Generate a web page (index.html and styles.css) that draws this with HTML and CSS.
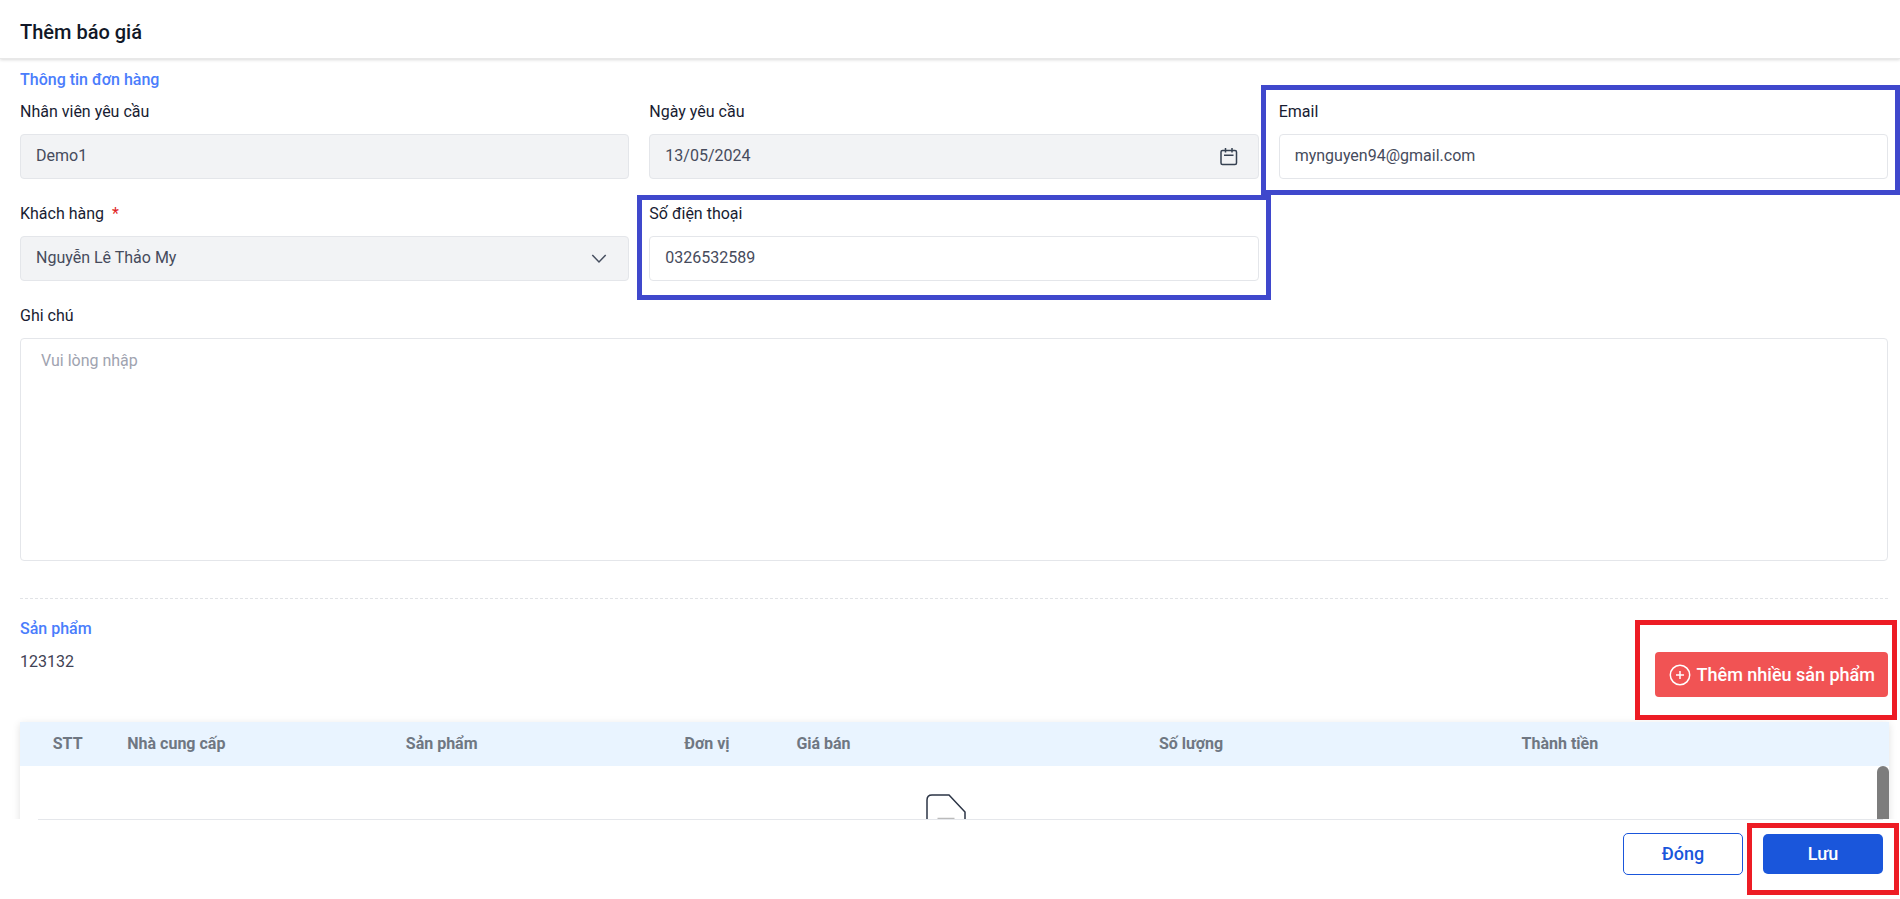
FILE: index.html
```html
<!DOCTYPE html>
<html lang="vi">
<head>
<meta charset="utf-8">
<meta name="viewport" content="width=device-width, initial-scale=1">
<title>Thêm báo giá</title>
<link rel="stylesheet" href="styles.css">
</head>
<body>
<form class="page">
  <header class="page-header"><h1 class="page-title">Thêm báo giá</h1></header>
  <main class="content">
    <h2 class="section-title">Thông tin đơn hàng</h2>
    <div class="fields">
      <div class="field">
        <label class="label" for="staff">Nhân viên yêu cầu</label>
        <input class="control" id="staff" type="text" value="Demo1" disabled>
      </div>
      <div class="field">
        <label class="label" for="date">Ngày yêu cầu</label>
        <div class="with-icon">
          <input class="control" id="date" type="text" value="13/05/2024" disabled>
          <svg class="icon icon-calendar" viewBox="0 0 18 18" fill="none" stroke="#364152" stroke-width="1.5" aria-hidden="true"><rect x="1" y="2.5" width="15.500" height="14" rx="1.500"/><path d="M5.500 0v4.500M12 0v4.500M4 7.200h9.500"/></svg>
        </div>
      </div>
      <div class="field marked mark-email">
        <label class="label" for="email">Email</label>
        <input class="control" id="email" type="text" value="mynguyen94@gmail.com">
      </div>
      <div class="field">
        <label class="label" for="customer">Khách hàng&nbsp; <span class="required">*</span></label>
        <div class="with-icon">
          <select class="control" id="customer" disabled><option>Nguyễn Lê Thảo My</option></select>
          <svg class="icon icon-chevron" viewBox="0 0 16 16" fill="none" stroke="#464e5f" stroke-width="1.5" aria-hidden="true"><path d="M1.300 4 8 11l6.700-7"/></svg>
        </div>
      </div>
      <div class="field marked mark-phone">
        <label class="label" for="phone">Số điện thoại</label>
        <input class="control" id="phone" type="text" value="0326532589">
      </div>
    </div>
    <div class="field">
      <label class="label" for="note">Ghi chú</label>
      <textarea class="control note" id="note" placeholder="Vui lòng nhập"></textarea>
    </div>
    <section class="products">
      <div class="products-head">
        <div>
          <h2 class="section-title">Sản phẩm</h2>
          <p class="code">123132</p>
        </div>
        <div class="marked mark-add">
          <button class="button button-add" type="button">
            <svg class="icon-plus" viewBox="0 0 22 22" fill="none" stroke="#fff" stroke-width="1.500" aria-hidden="true"><circle cx="11" cy="11" r="9.700"/><path d="M11 7v8M7 11h8"/></svg>
            Thêm nhiều sản phẩm
          </button>
        </div>
      </div>
      <div class="table-card">
        <table class="table">
          <colgroup><col class="col-index"><col class="col-name"><col class="col-name"><col class="col-unit"><col class="col-amount"><col class="col-amount"><col></colgroup>
          <thead><tr><th class="center">STT</th><th>Nhà cung cấp</th><th>Sản phẩm</th><th>Đơn vị</th><th>Giá bán</th><th>Số lượng</th><th>Thành tiền</th></tr></thead>
          <tbody><tr><td class="empty" colspan="7">
            <svg class="icon-empty" viewBox="0 0 40 48" fill="none" stroke="#2b3445" stroke-width="1.500" aria-hidden="true"><path d="M6 1h17l16 17v25q0 4-4 4H5q-4 0-4-4V6q0-5 5-5z"/><path stroke="#bbb" d="M11.500 24.500h17M11.500 31.500h17"/></svg>
          </td></tr></tbody>
        </table>
        <div class="scroll-thumb"></div>
      </div>
    </section>
  </main>
  <footer class="actions">
    <button class="button button-close" type="button">Đóng</button>
    <div class="marked mark-save"><button class="button button-save" type="submit">Lưu</button></div>
  </footer>
</form>
</body>
</html>
```
FILE: styles.css
```css
* { box-sizing: border-box; }
body { margin: 0; background: #fff; color: #3f4254; font: 400 16px/24px Roboto, "Noto Sans", sans-serif; }
h1, h2, p { margin: 0; }
.page { display: flex; flex-direction: column; height: 100vh; }
.page-header { flex: none; padding: 20px 20px 14px; border-bottom: 1px solid #e8e8e8; box-shadow: 0 1px 3px rgba(0, 0, 0, .15); }
.page-title { color: #111827; font-size: 20px; font-weight: 500; line-height: 24px; }
.content { flex: 1; min-height: 0; overflow: hidden; padding: 9px 12px 0 20px; }
.section-title { color: #4a7dfc; font-size: 16px; font-weight: 500; line-height: 24px; }
.fields { display: grid; grid-template-columns: repeat(3, minmax(0, 1fr)); column-gap: 20px; }
.field { display: flex; flex-direction: column; gap: 10px; padding: 8px 0 15px; }
.label { color: #181c32; line-height: 24px; }
.required { color: #e02424; }
.control { width: 100%; height: 45px; margin: 0; padding: 0 15px 2px; border: 1px solid #e4e6ea; border-radius: 4px; background: #fff; color: #464b5c; font: inherit; outline: none; appearance: none; }
.control:disabled { background: #f2f3f5; color: #464b5c; opacity: 1; }
.with-icon { display: grid; align-items: center; }
.with-icon > * { grid-area: 1 / 1; }
.icon { justify-self: end; pointer-events: none; }
.icon-calendar { width: 18px; height: 18px; margin-right: 21px; }
.icon-chevron { width: 16px; height: 16px; margin-right: 22px; }
.note { display: block; height: 223px; padding: 10px 20px; resize: none; }
.note::placeholder { color: #a0a3b0; opacity: 1; }

/* Highlight frames */
.marked { position: relative; }
.marked::after { content: ""; position: absolute; z-index: 1; border: 5px solid #3f48cc; pointer-events: none; }
.mark-email::after { inset: -7px -12px -1px -18px; }
.mark-phone::after { inset: 1px -12px -4px; }
.mark-add::after { inset: -32px -9px -23px -20px; border-color: #ed1c24; }
.mark-save::after { inset: -11px -16px -21px; border-color: #ed1c24; }

.products { margin-top: 22px; padding-top: 18px; border-top: 1px dashed #e1e3e6; }
.products-head { display: flex; justify-content: space-between; align-items: flex-end; margin-bottom: 25px; }
.code { margin: 9px 0 23px; }
.button { display: flex; align-items: center; justify-content: center; border: 0; border-radius: 4px; color: #fff; font: 500 18px/24px Roboto, "Noto Sans", sans-serif; cursor: pointer; }
.button-add { gap: 6px; height: 45px; padding: 0 13px 0 14px; background: #f15354; }
.icon-plus { width: 22px; height: 22px; }
.table-card { position: relative; margin-right: -1px; box-shadow: 0 2px 8px rgba(0, 0, 0, .12); }
.table { width: 100%; table-layout: fixed; border-collapse: collapse; }
.table th { height: 44px; padding: 0 12px; background: #e9f4ff; color: #6f7782; font-weight: 700; text-align: left; }
.table th.center { text-align: center; }
.col-index { width: 5.1%; }
.col-name { width: 14.9%; }
.col-unit { width: 6%; }
.col-amount { width: 19.4%; }
.empty { padding: 28px 18px 28px 0; text-align: center; }
.icon-empty { width: 40px; height: 48px; }
.scroll-thumb { position: absolute; top: 44px; right: 0; bottom: 0; width: 12px; border-radius: 6px; background: #7d7d7d; }
.actions { flex: none; display: flex; justify-content: flex-end; align-items: center; gap: 20px; margin: 0 17px 0 38px; padding: 13px 0 24px; border-top: 1px solid #e5e7eb; }
.button-close { width: 120px; height: 42px; border: 1px solid #1a56db; border-radius: 5px; background: #fff; color: #1a56db; }
.button-save { width: 120px; height: 40px; border-radius: 5px; background: #1a56db; }
```
